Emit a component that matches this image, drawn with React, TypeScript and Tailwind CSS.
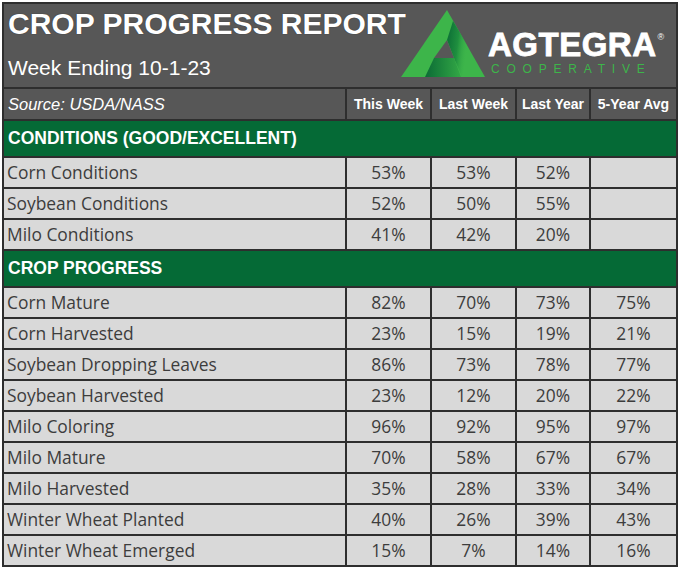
import React from "react";

const conditions: string[][] = [
  ["Corn Conditions", "53%", "53%", "52%", ""],
  ["Soybean Conditions", "52%", "50%", "55%", ""],
  ["Milo Conditions", "41%", "42%", "20%", ""],
];

const progress: string[][] = [
  ["Corn Mature", "82%", "70%", "73%", "75%"],
  ["Corn Harvested", "23%", "15%", "19%", "21%"],
  ["Soybean Dropping Leaves", "86%", "73%", "78%", "77%"],
  ["Soybean Harvested", "23%", "12%", "20%", "22%"],
  ["Milo Coloring", "96%", "92%", "95%", "97%"],
  ["Milo Mature", "70%", "58%", "67%", "67%"],
  ["Milo Harvested", "35%", "28%", "33%", "34%"],
  ["Winter Wheat Planted", "40%", "26%", "39%", "43%"],
  ["Winter Wheat Emerged", "15%", "7%", "14%", "16%"],
];

const arial = { fontFamily: '"Liberation Sans", Arial, sans-serif' };

function Logo() {
  return (
    <svg width="86" height="70" viewBox="0 0 86 70" className="mt-[4px] shrink-0">
      <defs>
        <linearGradient id="legGrad" x1="0" y1="0" x2="1" y2="0.3">
          <stop offset="0" stopColor="#0a6a35" />
          <stop offset="0.55" stopColor="#1f8f3f" />
          <stop offset="1" stopColor="#3db54a" stopOpacity="0" />
        </linearGradient>
        <linearGradient id="barGrad" x1="0" y1="0" x2="1" y2="0">
          <stop offset="0" stopColor="#0b6b35" />
          <stop offset="1" stopColor="#33a846" />
        </linearGradient>
      </defs>
      <polygon points="46,2 0,69 84,69" fill="#3db54a" />
      <polygon points="52,13 68,40 61,69 53,50 46,32" fill="url(#legGrad)" />
      <polygon points="24,69 33,50 53,50 60,69" fill="url(#barGrad)" />
      <polygon points="33,50 46,32 53,50" fill="#575757" />
    </svg>
  );
}

function DataRow({ r }: { r: string[] }) {
  return (
    <div className="grid grid-cols-[341px_85px_85px_74px_87px] h-[31px] border-t-2 border-[#2e2e2e] bg-[#d9d9d9] text-[#3d3d3d] text-[17.4px]" style={{ fontFamily: '"Open Sans", "Noto Sans", sans-serif' }}>
      <div className="flex items-center pl-[3px]">{r[0]}</div>
      {r.slice(1).map((v, i) => (
        <div key={i} className="flex items-center justify-center border-l-2 border-[#2e2e2e]">
          {v}
        </div>
      ))}
    </div>
  );
}

function GreenRow({ label }: { label: string }) {
  return (
    <div className="h-[37px] border-t-2 border-[#2e2e2e] bg-[#056a36] flex items-center pl-[4px] text-white font-bold text-[17.5px]" style={arial}>
      {label}
    </div>
  );
}

export default function App() {
  const heads = ["This Week", "Last Week", "Last Year", "5-Year Avg"];
  return (
    <div className="w-[680px] h-[568px] bg-white pt-[2px] pl-[2px]">
      <div className="w-[676px] border-2 border-[#2e2e2e] bg-[#575757]">
        <div className="h-[83px] flex items-start" style={arial}>
          <div className="w-[397px] pl-[4px] pt-[5px] text-white">
            <div className="text-[30px] leading-[30px] font-bold whitespace-nowrap [text-shadow:0_0_1px_rgba(0,0,0,0.6)]">CROP PROGRESS REPORT</div>
            <div className="text-[21px] leading-[21px] mt-[18px] whitespace-nowrap">Week Ending 10-1-23</div>
          </div>
          <Logo />
          <div className="flex flex-col mt-[24px] ml-[1px]">
            <div className="text-white font-bold text-[33px] leading-[33px] tracking-[0.5px] whitespace-nowrap flex items-start [-webkit-text-stroke:0.8px_white]">
              AGTEGRA<span className="text-[9px] leading-[9px] mt-[5px] ml-[1px] font-normal [-webkit-text-stroke:0px]">®</span>
            </div>
            <div className="text-[#3db54a] text-[12px] leading-[12px] mt-[2px] ml-[3px] tracking-[6.8px] whitespace-nowrap font-light">
              COOPERATIVE
            </div>
          </div>
        </div>
        <div className="grid grid-cols-[341px_85px_85px_74px_87px] h-[32px] border-t-2 border-[#2e2e2e] text-white" style={arial}>
          <div className="flex items-center pl-[4px] italic text-[16.5px]">Source: USDA/NASS</div>
          {heads.map((h) => (
            <div key={h} className="flex items-center justify-center border-l-2 border-[#2e2e2e] font-bold text-[14px] whitespace-nowrap">
              {h}
            </div>
          ))}
        </div>
        <GreenRow label="CONDITIONS (GOOD/EXCELLENT)" />
        {conditions.map((r) => (
          <DataRow key={r[0]} r={r} />
        ))}
        <GreenRow label="CROP PROGRESS" />
        {progress.map((r) => (
          <DataRow key={r[0]} r={r} />
        ))}
      </div>
    </div>
  );
}
